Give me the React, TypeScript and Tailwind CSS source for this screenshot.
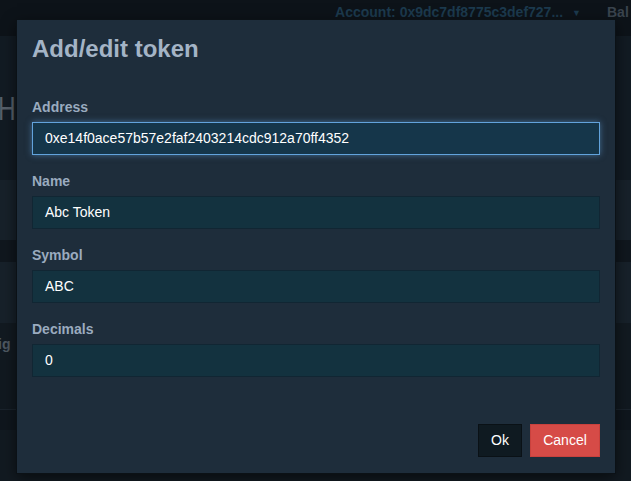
import React from "react";

function Field({
  label,
  value,
  focused,
}: {
  label: string;
  value: string;
  focused?: boolean;
}) {
  return (
    <div className="flex flex-col">
      <label className="h-4 text-[14px] font-bold leading-4 text-[#9aabbf]">{label}</label>
      <div
        className={`mt-[7px] flex h-[33px] items-center border px-3 text-[14px] text-white ${
          focused
            ? "border-[#62a3dc] bg-[#15364a] shadow-[0_0_6px_rgba(98,163,220,0.55)]"
            : "border-[#112633] bg-[#13323f]"
        }`}
      >
        {value}
      </div>
    </div>
  );
}

export default function App() {
  return (
    <div
      className="relative h-[481px] w-[631px] overflow-hidden bg-[#111a22]"
      style={{ fontFamily: '"Liberation Sans", Arial, sans-serif' }}
    >
      {/* dimmed page behind the dialog */}
      <div className="flex h-full flex-col">
        <div className="flex h-9 items-start justify-end bg-[#0d1319] pt-[4px] text-[14px] font-bold leading-4">
          <span className="text-[#1c3a4e]">Account: 0x9dc7df8775c3def727...</span>
          <span className="ml-[9px] mt-[1px] text-[9px] text-[#1c3a4e]">▼</span>
          <span className="ml-[26px] w-[24px] overflow-hidden text-[#3a444e]">Bal</span>
        </div>
        <div className="relative h-[144px] bg-[#121b23]">
          <span className="absolute left-[-2px] top-[55px] origin-left scale-x-[0.72] text-[34px] leading-none text-[#56606a]">
            H
          </span>
        </div>
        <div className="h-[60px] bg-[#17212a]" />
        <div className="h-[22px] bg-[#10171e]" />
        <div className="h-[61px] bg-[#17212a]" />
        <div className="relative h-[37px] bg-[#121a21]">
          <span className="absolute left-[-2px] top-[11px] text-[14px] font-bold text-[#4e5861]">ig</span>
        </div>
        <div className="h-[50px] border-b border-[#1a232c] bg-[#111920]" />
        <div className="h-[20px] bg-[#0f161d]" />
        <div className="flex-1 bg-[#121a21]" />
      </div>

      {/* dialog */}
      <div className="absolute left-[17px] top-[20px] flex h-[453px] w-[598px] flex-col bg-[#1e2d3b] px-[15px] pt-[16px] shadow-[0_0_0_1px_#0b1116,0_4px_14px_rgba(0,0,0,0.6)]">
        <h1 className="h-[26px] text-[24px] font-bold leading-[26px] text-[#a4b4c6]">Add/edit token</h1>
        <div className="mt-[37px] flex flex-col gap-[18px]">
          <Field label="Address" value="0xe14f0ace57b57e2faf2403214cdc912a70ff4352" focused />
          <Field label="Name" value="Abc Token" />
          <Field label="Symbol" value="ABC" />
          <Field label="Decimals" value="0" />
        </div>
        <div className="mt-[47px] flex justify-end gap-2">
          <button className="h-[33px] w-[44px] border border-[#0a1116] bg-[#0f1a21] text-[14px] text-white">
            Ok
          </button>
          <button className="h-[33px] w-[70px] border border-[#c9413d] bg-[#d64b47] text-[14px] text-white">
            Cancel
          </button>
        </div>
      </div>
    </div>
  );
}
